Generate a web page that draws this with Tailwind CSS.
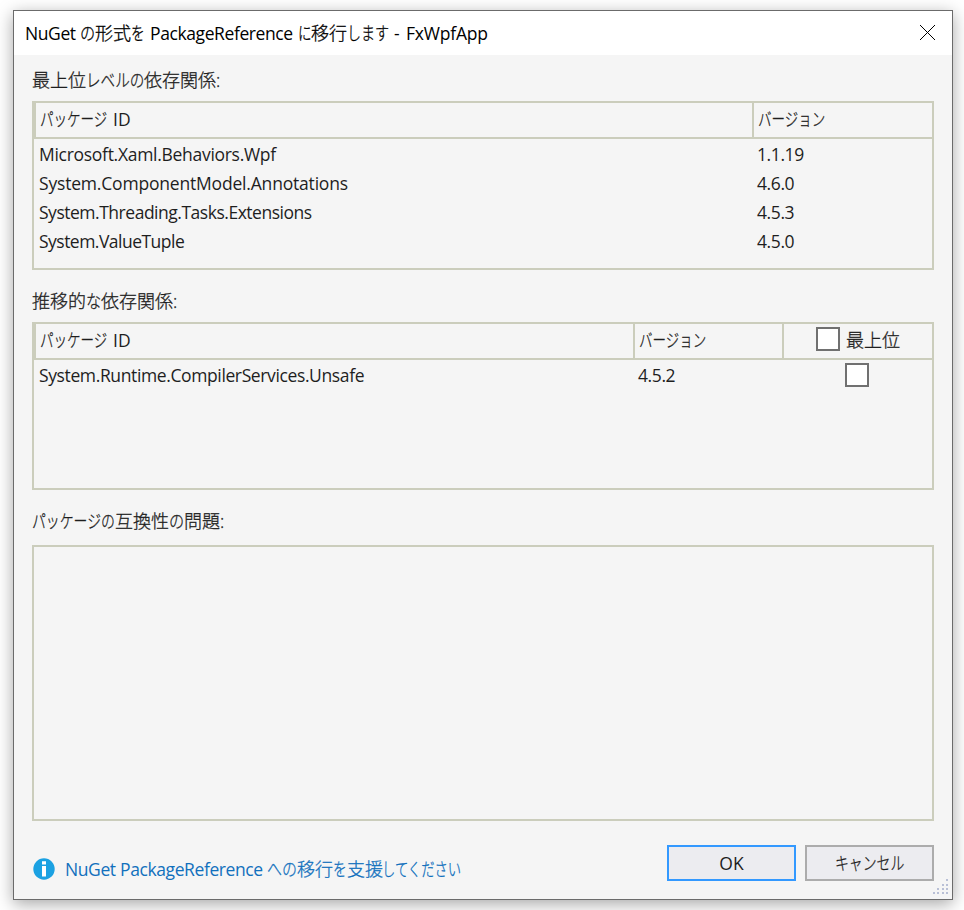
<!DOCTYPE html>
<html lang="ja">
<head>
<meta charset="utf-8">
<title>FxWpfApp</title>
<script src="https://cdn.jsdelivr.net/npm/@tailwindcss/browser@4"></script>
</head>
<body class="w-[964px] h-[910px] overflow-hidden bg-white pl-[13px] pt-[10px] font-['Open_Sans','Noto_Sans_CJK_JP',sans-serif] text-[18px] leading-[24px] text-[#1e1e1e] whitespace-nowrap">
<main class="relative flex h-[890px] w-[940px] flex-col border border-[#6b6b6b] bg-[#f5f5f5] shadow-[0_4px_16px_rgba(0,0,0,0.35)]">
  <header class="flex h-[44px] shrink-0 items-center justify-between bg-white pl-[11px] pr-[17px] text-black">
    <h1 class="flex items-baseline font-light [-webkit-text-stroke:0.3px]">
      <span class="w-[55px] text-[17.5px] font-normal tracking-[-0.4px] [-webkit-text-stroke:0]">NuGet</span>
      <span class="w-[15px] origin-left scale-x-[.84]">の</span><span class="w-[36px]">形式</span><span class="w-[19px] origin-left scale-x-[.76]">を</span>
      <span class="w-[148px] text-[17.5px] font-normal tracking-[-0.4px] [-webkit-text-stroke:0]">PackageReference</span>
      <span class="w-[13px] origin-left scale-x-[.75]">に</span><span class="w-[36px]">移行</span><span class="w-[47px] origin-left scale-x-[.78]">します</span>
      <span class="w-[12px] text-[17.5px] font-normal [-webkit-text-stroke:0]">-</span>
      <span class="text-[17.5px] font-normal tracking-[-0.2px] [-webkit-text-stroke:0]">FxWpfApp</span>
    </h1>
    <svg class="mb-[1px] h-[15px] w-[15px]" viewBox="0 0 15 15" stroke="#000" stroke-width="1"><path d="M0 0l15 15M15 0L0 15"/></svg>
  </header>

  <section class="flex grow flex-col px-[18px]">
    <h2 class="mt-[13px] flex h-[24px] items-baseline font-light [-webkit-text-stroke:0.3px]"><span class="w-[54px]">最上位</span><span class="w-[58px] origin-left scale-x-[.81]">レベルの</span><span>依存関係:</span></h2>
    <div class="mt-[9px] h-[169px] border-2 border-[#cbcdbc]">
      <div class="flex h-[36px] items-center border-b-2 border-l-2 border-[#cbcdbc] font-light [-webkit-text-stroke:0.3px]">
        <div class="flex h-full w-[718px] items-center border-r-2 border-[#cbcdbc] pb-[2px] pl-[4px]"><span class="w-[73px] origin-left scale-x-[.75]">パッケージ</span><span class="text-[17.5px] font-normal [-webkit-text-stroke:0]">ID</span></div>
        <div class="pb-[2px] pl-[4px]"><span class="inline-block origin-left scale-x-[.75]">バージョン</span></div>
      </div>
      <div class="grid grid-cols-[718px_1fr] pl-[5px] pt-[1px] text-[17.5px] leading-[29px] tracking-[-0.4px]">
        <span class="tracking-[-0.29px]">Microsoft.Xaml.Behaviors.Wpf</span><span>1.1.19</span>
        <span class="tracking-[-0.19px]">System.ComponentModel.Annotations</span><span>4.6.0</span>
        <span class="tracking-[-0.48px]">System.Threading.Tasks.Extensions</span><span>4.5.3</span>
        <span class="tracking-[-0.52px]">System.ValueTuple</span><span>4.5.0</span>
      </div>
    </div>

    <h2 class="mt-[19px] flex h-[24px] items-baseline font-light [-webkit-text-stroke:0.3px]"><span class="w-[54px]">推移的</span><span class="w-[15px] origin-left scale-x-[.84]">な</span><span>依存関係:</span></h2>
    <div class="mt-[9px] h-[168px] border-2 border-[#cbcdbc]">
      <div class="flex h-[36px] items-center border-b-2 border-l-2 border-[#cbcdbc] font-light [-webkit-text-stroke:0.3px]">
        <div class="flex h-full w-[599px] items-center border-r-2 border-[#cbcdbc] pb-[2px] pl-[4px]"><span class="w-[73px] origin-left scale-x-[.75]">パッケージ</span><span class="text-[17.5px] font-normal [-webkit-text-stroke:0]">ID</span></div>
        <div class="flex h-full w-[149px] items-center border-r-2 border-[#cbcdbc] pb-[2px] pl-[4px]"><span class="origin-left scale-x-[.75]">バージョン</span></div>
        <div class="flex h-full items-center gap-[6px] pb-[2px] pl-[32px]"><span class="mb-[2px] h-[24px] w-[24px] border-2 border-[#707070] bg-white"></span><span>最上位</span></div>
      </div>
      <div class="grid grid-cols-[599px_207px_1fr] pl-[5px] pt-[1px] text-[17.5px] leading-[29px] tracking-[-0.4px]">
        <span class="tracking-[-0.38px]">System.Runtime.CompilerServices.Unsafe</span><span>4.5.2</span><span class="mt-[2px] h-[24px] w-[24px] border-2 border-[#707070] bg-white"></span>
      </div>
    </div>

    <h2 class="mt-[19px] flex h-[24px] items-baseline font-light [-webkit-text-stroke:0.3px]"><span class="w-[83px] origin-left scale-x-[.77]">パッケージの</span><span class="w-[54px]">互換性</span><span class="w-[15px] origin-left scale-x-[.84]">の</span><span>問題:</span></h2>
    <div class="mt-[12px] h-[276px] border-2 border-[#cbcdbc]"></div>

    <footer class="mt-[24px] flex h-[36px] items-center">
      <a class="mt-[12px] flex items-center text-[#1170bd]">
        <svg class="ml-[1px] mr-[10px] h-[22px] w-[22px]" viewBox="0 0 22 22"><circle cx="11" cy="11" r="10.700" fill="#1ba1e2"/><path d="M9 3.200h4v3.300H9zM9 8h4v10.500H9z" fill="#fff"/></svg>
        <span class="flex items-baseline font-light [-webkit-text-stroke:0.3px]">
          <span class="w-[55px] text-[17.5px] font-normal tracking-[-0.4px] [-webkit-text-stroke:0]">NuGet</span>
          <span class="w-[147px] text-[17.5px] font-normal tracking-[-0.4px] [-webkit-text-stroke:0]">PackageReference</span>
          <span class="w-[30px] origin-left scale-x-[.83]">への</span><span class="w-[36px]">移行</span><span class="w-[14px] origin-left scale-x-[.76]">を</span><span class="w-[35px]">支援</span><span class="origin-left scale-x-[.74]">してください</span>
        </span>
      </a>
      <button class="absolute right-[156px] h-[36px] w-[129px] border-2 border-[#3399ff] bg-[#ececf0] text-[17.5px]">OK</button>
      <button class="absolute right-[18px] flex h-[36px] w-[129px] items-center border-2 border-[#acacac] bg-[#ececf0] pl-[28px] font-light [-webkit-text-stroke:0.3px]"><span class="origin-left scale-x-[.77]">キャンセル</span></button>
    </footer>
  </section>
  <svg class="absolute bottom-[3px] right-[4px] h-[17px] w-[16px]" viewBox="0 0 16 17" fill="#b9c0d6"><path d="M14 0h2v2h-2zM14 5h2v2h-2zM10 5h2v2h-2zM14 9h2v2h-2zM10 9h2v2h-2zM5 9h2v2H5zM14 13h2v2h-2zM10 13h2v2h-2zM5 13h2v2H5zM1 13h2v2H1z"/></svg>
</main>
</body>
</html>
